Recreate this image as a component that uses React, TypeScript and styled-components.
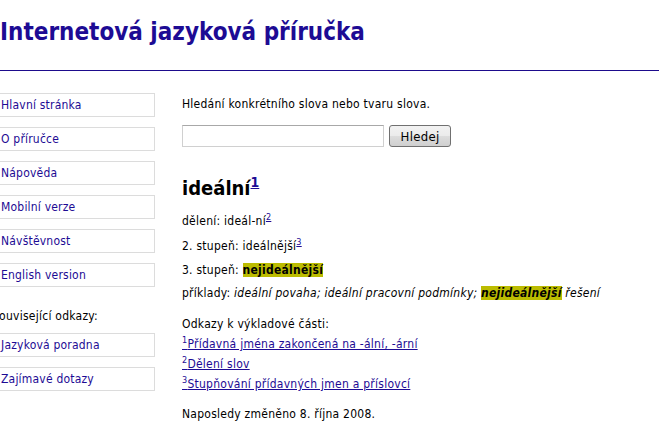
import React from "react";
import styled, { createGlobalStyle } from "styled-components";

const GlobalStyle = createGlobalStyle`
  body {
    margin: 0;
    background: #fff;
    font-family: "DejaVu Sans Condensed", "DejaVu Sans", sans-serif;
    font-size: 12px;
    letter-spacing: 0.25px;
    color: #000;
    overflow: hidden;
  }
`;

const Header = styled.div`
  height: 70px;
  border-bottom: 1px solid #1d0b8c;
  display: flex;
  align-items: flex-start;
`;

const Title = styled.h1`
  margin: 18px 0 0 0;
  font-size: 24px;
  font-weight: bold;
  color: #1d0b94;
  letter-spacing: 0;
`;

const Body = styled.div`
  display: flex;
  align-items: flex-start;
`;

const Sidebar = styled.div`
  width: 163px;
  margin-left: -8px;
  padding-top: 22px;
  display: flex;
  flex-direction: column;
  gap: 10px;
`;

const NavBox = styled.a`
  display: block;
  height: 22px;
  line-height: 22px;
  padding-left: 8px;
  border: 1px solid #dcdcdc;
  color: #1d0b94;
  text-decoration: none;
  letter-spacing: 0.2px;
`;

const SideHeading = styled.div`
  margin: 11px 0 -1px 0;
  height: 16px;
  line-height: 16px;
`;

const Main = styled.div`
  margin-left: 27px;
  padding-top: 23px;
`;

const Line = styled.p<{ gap?: number }>`
  margin: ${({ gap }) => gap ?? 0}px 0 0 0;
  line-height: 20px;
`;

const SearchRow = styled.form`
  display: flex;
  align-items: center;
  gap: 5px;
  margin-top: 11px;
`;

const SearchInput = styled.input`
  width: 198px;
  height: 18px;
  border: 1px solid #d0d0d0;
  border-top-color: #a8a8a8;
  padding: 1px;
  outline: none;
`;

const SearchButton = styled.button`
  width: 62px;
  height: 22px;
  border: 1px solid #707070;
  border-radius: 3px;
  background: linear-gradient(#f2f2f2 0%, #ebebeb 50%, #dddddd 51%, #cfcfcf 100%);
  font-family: "DejaVu Sans Condensed", "DejaVu Sans", sans-serif;
  font-size: 13px;
  letter-spacing: 0.3px;
  color: #000;
  padding: 0;
`;

const Headword = styled.h2`
  margin: 28px 0 0 0;
  font-size: 20px;
  font-weight: bold;
  line-height: 26px;
  letter-spacing: 0;
`;

const Sup = styled.sup<{ big?: boolean }>`
  font-size: ${({ big }) => (big ? "14px" : "9px")};
  line-height: 0;
`;

const SupLink = styled.a`
  color: #1d0b94;
`;

const Mark = styled.b`
  background: #bcbc00;
`;

const Link = styled.a`
  color: #1d0b94;
  text-decoration: underline;
`;

const RefList = styled.div`
  margin-top: 11px;
  line-height: 20px;
`;

export default function App() {
  const nav = [
    "Hlavní stránka",
    "O příručce",
    "Nápověda",
    "Mobilní verze",
    "Návštěvnost",
    "English version",
  ];
  const related = ["Jazyková poradna", "Zajímavé dotazy"];
  const refs = [
    "Přídavná jména zakončená na -ální, -ární",
    "Dělení slov",
    "Stupňování přídavných jmen a příslovcí",
  ];
  return (
    <>
      <GlobalStyle />
      <Header>
        <Title>Internetová jazyková příručka</Title>
      </Header>
      <Body>
        <Sidebar>
          {nav.map((n) => (
            <NavBox key={n} href="#">
              {n}
            </NavBox>
          ))}
          <SideHeading>Související odkazy:</SideHeading>
          {related.map((n) => (
            <NavBox key={n} href="#">
              {n}
            </NavBox>
          ))}
        </Sidebar>
        <Main>
          <Line>Hledání konkrétního slova nebo tvaru slova.</Line>
          <SearchRow onSubmit={(e) => e.preventDefault()}>
            <SearchInput type="text" />
            <SearchButton type="submit">Hledej</SearchButton>
          </SearchRow>
          <Headword>
            ideální
            <Sup big>
              <SupLink href="#">1</SupLink>
            </Sup>
          </Headword>
          <Line gap={10}>
            dělení: ideál-ní
            <Sup>
              <SupLink href="#">2</SupLink>
            </Sup>
          </Line>
          <Line gap={5}>
            2. stupeň: ideálnější
            <Sup>
              <SupLink href="#">3</SupLink>
            </Sup>
          </Line>
          <Line gap={4}>
            3. stupeň: <Mark>nejideálnější</Mark>
          </Line>
          <Line gap={3}>
            příklady: <i>ideální povaha; ideální pracovní podmínky; </i>
            <Mark>
              <i>nejideálnější</i>
            </Mark>{" "}
            <i>řešení</i>
          </Line>
          <RefList>
            <div>Odkazy k výkladové části:</div>
            {refs.map((r, i) => (
              <div key={r}>
                <Link href="#">
                  <Sup>{i + 1}</Sup>
                  {r}
                </Link>
              </div>
            ))}
          </RefList>
          <Line gap={10}>Naposledy změněno 8. října 2008.</Line>
        </Main>
      </Body>
    </>
  );
}
